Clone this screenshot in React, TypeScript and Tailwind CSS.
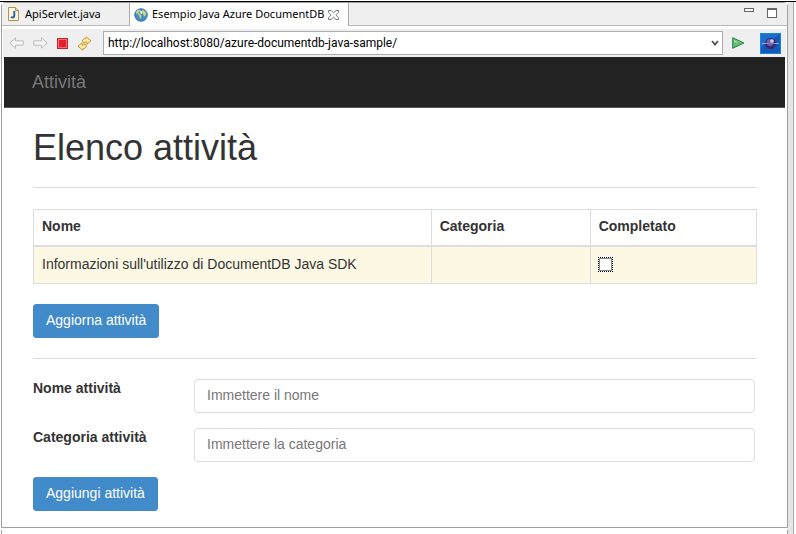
import type { ReactNode } from "react";

function JavaFileIcon() {
  return (
    <svg className="shrink-0" width="11" height="14" viewBox="0 0 11 14" aria-hidden="true">
      <path d="M.5.5h7l3 3v10H.5z" fill="#fdf7e3" stroke="#b5904f" />
      <path d="M7.500.5v3h3" fill="#e9cf8e" stroke="#b5904f" />
      <path d="M6.300 4v4.600q0 1.900-1.800 1.900-1 0-1.700-.6" fill="none" stroke="#2463a6" strokeWidth="1.900" />
    </svg>
  );
}

function GlobeIcon() {
  return (
    <svg className="shrink-0" width="14" height="14" viewBox="0 0 14 14" aria-hidden="true">
      <circle cx="7" cy="7" r="6.300" fill="#3c8fcb" stroke="#3b6f9f" strokeWidth=".9" />
      <path d="M2 3.500Q3.500 1.500 5.500 1.500L6 3 4.500 5 2 6z" fill="#a9d4a0" />
      <path d="M3.500 4.500L6 5.500 7.500 8 7 11 5.500 9.500 4.500 7z" fill="#e3c35c" />
      <path d="M8.500 1.800l3 2 .8 2.700-2 2-1.500-2.500-1-2z" fill="#cfd777" />
      <path d="M6.300 2.500l2 1-.5 2.500-1.500-.8z" fill="#e8f5fb" />
    </svg>
  );
}

function CloseIcon() {
  return (
    <svg className="shrink-0" width="11" height="10" viewBox="0 0 11 10" fill="#fff" stroke="#6f6f6f" strokeWidth=".9" aria-hidden="true">
      <path d="M.5.5h2.500l2.500 2.300L8 .5h2.500v1.800L7.800 5l2.700 2.700v1.800H8L5.500 7.200 3 9.500H.5V7.700L3.200 5 .5 2.300z" />
    </svg>
  );
}

function ArrowIcon({ flip = false }: { flip?: boolean }) {
  return (
    <svg width="15" height="12" viewBox="0 0 15 12" className={flip ? "shrink-0 -scale-x-100" : "shrink-0"} aria-hidden="true">
      <path d="M.8 6L6.500.8v3h7.700v4.400H6.500v3z" fill="#f6f6f6" stroke="#bcbcbc" strokeLinejoin="round" />
    </svg>
  );
}

function StopIcon() {
  return (
    <svg width="11" height="11" viewBox="0 0 11 11" aria-hidden="true">
      <rect x=".5" y=".5" width="10" height="10" fill="#e81e2e" stroke="#c4262e" />
      <rect x="1.500" y="1.500" width="8" height="8" fill="none" stroke="#f4717a" />
    </svg>
  );
}

function RefreshIcon() {
  return (
    <svg width="15" height="15" viewBox="0 0 15 15" fill="#fdeaa6" stroke="#c8902c" strokeWidth=".9" strokeLinejoin="round" aria-hidden="true">
      <path d="M6 6.700Q4.600 2.600 8.800 2.500L9 .7l5 4.100-4 3.400-.2-2.400Q7.900 5.200 7.800 6.900z" />
      <path d="M9 8.300Q10.400 12.400 6.200 12.500L6 14.300l-5-4.100 4-3.400.2 2.400Q7.100 9.800 7.200 8.100z" />
    </svg>
  );
}

function GoIcon() {
  return (
    <svg width="13" height="12" viewBox="0 0 13 12" aria-hidden="true">
      <path d="M.7.7L12 6 .7 11.300z" fill="#63bd73" stroke="#278347" strokeLinejoin="round" />
      <path d="M2 3l5 2.500H2z" fill="#a5dca6" />
    </svg>
  );
}

function EclipseIcon() {
  return (
    <svg width="21" height="21" viewBox="0 0 21 21" aria-hidden="true">
      <rect width="21" height="21" fill="#1b83dc" />
      <rect x="1" y="1" width="19" height="19" fill="#1259b8" />
      <path d="M1 1h19L1 14z" fill="#196fcb" />
      <circle cx="10.500" cy="10.500" r="5.500" fill="#38286f" />
      <circle cx="10" cy="9.500" r="3.500" fill="#6f61a5" />
      <circle cx="12" cy="8" r="1.800" fill="#d7cfed" />
      <path d="M2 10.500h4M15 10.500h4" stroke="#9fa9e2" />
      <path d="M6 10.500h9" stroke="#7f78c4" />
    </svg>
  );
}

function ToolButton({ label, children }: { label: string; children: ReactNode }) {
  return (
    <button type="button" aria-label={label} className="flex shrink-0 items-center justify-center">
      {children}
    </button>
  );
}

function EditorTabs() {
  return (
    <div className="flex h-[23px] items-stretch border-b border-[#bababa] bg-[#efefef] font-['Noto_Sans','Open_Sans',sans-serif] text-[11px] text-black">
      <button type="button" className="flex w-32 shrink-0 items-center gap-1.5 border-r border-[#aaa] pl-1.5">
        <JavaFileIcon />
        <span className="whitespace-nowrap">ApiServlet.java</span>
      </button>
      <button type="button" className="-mb-px flex w-[219px] shrink-0 items-center gap-1 border-r border-[#aaa] bg-white pl-1">
        <GlobeIcon />
        <span className="whitespace-nowrap">Esempio Java Azure DocumentDB</span>
        <CloseIcon />
      </button>
      <div className="ml-auto flex items-start gap-[13px] pt-[5px] pr-2.5">
        <button type="button" aria-label="Riduci a icona" className="h-1 w-2.5 border border-[#666] bg-white" />
        <button type="button" aria-label="Ingrandisci" className="h-2.5 w-2.5 border border-t-2 border-[#666] bg-white" />
      </div>
    </div>
  );
}

function BrowserBar() {
  return (
    <div className="mx-px mt-[3px] flex h-7 items-center bg-[#efefef] pr-[5px] pl-1.5">
      <div className="flex w-[94px] shrink-0 items-center gap-[9px]">
        <ToolButton label="Indietro"><ArrowIcon /></ToolButton>
        <ToolButton label="Avanti"><ArrowIcon flip /></ToolButton>
        <ToolButton label="Interrompi"><StopIcon /></ToolButton>
        <ToolButton label="Aggiorna"><RefreshIcon /></ToolButton>
      </div>
      <div className="relative min-w-0 flex-1">
        <select
          aria-label="Indirizzo"
          className="block h-6 w-full appearance-none border border-[#abadb3] bg-white pr-6 pl-1 text-xs text-black"
        >
          <option>http://localhost:8080/azure-documentdb-java-sample/</option>
        </select>
        <svg className="pointer-events-none absolute top-2 right-1" width="8" height="8" viewBox="0 0 8 8" aria-hidden="true">
          <path d="M1 2l3 3.500L7 2" fill="none" stroke="#505050" strokeWidth="1.800" />
        </svg>
      </div>
      <div className="flex shrink-0 items-center gap-[15px] pl-[9px]">
        <ToolButton label="Vai"><GoIcon /></ToolButton>
        <ToolButton label="Apri browser esterno"><EclipseIcon /></ToolButton>
      </div>
    </div>
  );
}

function PrimaryButton({ children }: { children: ReactNode }) {
  return (
    <button type="button" className="block h-[34px] rounded-[3px] border border-[#428bca] bg-[#428bca] px-3 pb-0.5 text-white">
      {children}
    </button>
  );
}

function Field({ id, label, placeholder }: { id: string; label: string; placeholder: string }) {
  return (
    <div className="mb-[15px] flex items-start">
      <label htmlFor={id} className="w-[161px] shrink-0 leading-[18px] font-bold">{label}</label>
      <input
        id={id}
        placeholder={placeholder}
        className="mr-0.5 h-[34px] min-w-0 flex-1 rounded border border-[#ddd] bg-white px-3 pb-0.5 placeholder:text-[#777]"
      />
    </div>
  );
}

function TaskPage() {
  return (
    <div className="mx-0.5 bg-white pb-4 font-['Liberation_Sans',Arial,sans-serif] text-sm leading-5 text-[#333]">
      <nav className="flex h-[51px] items-center border-b border-[#555] bg-[#222] px-7">
        <a href="#" className="text-lg text-[#777]">Attività</a>
      </nav>
      <main className="pr-7 pl-[29px]">
        <h1 className="pt-5 text-4xl">Elenco attività</h1>
        <hr className="mt-[19px] mb-[21px] border-[#ddd]" />
        <table className="mb-5 w-full table-fixed border-collapse border border-[#ddd] text-left">
          <colgroup>
            <col className="w-[55%]" />
            <col className="w-[22%]" />
            <col className="w-[23%]" />
          </colgroup>
          <thead>
            <tr className="border-b-2 border-[#ddd]">
              <th className="h-9 border-x border-[#ddd] px-2 pb-0.5">Nome</th>
              <th className="border-x border-[#ddd] px-2 pb-0.5">Categoria</th>
              <th className="border-x border-[#ddd] px-2 pb-0.5">Completato</th>
            </tr>
          </thead>
          <tbody>
            <tr className="bg-[#fcf8e3]">
              <td className="h-[38px] border-x border-[#ddd] px-2 pb-0.5">Informazioni sull'utilizzo di DocumentDB Java SDK</td>
              <td className="border-x border-[#ddd] px-2" />
              <td className="border-x border-[#ddd] px-[7px]">
                <input
                  type="checkbox"
                  aria-label="Completato"
                  className="block size-[15px] appearance-none border border-dotted border-black bg-white inset-ring inset-ring-[#888]"
                />
              </td>
            </tr>
          </tbody>
        </table>
        <PrimaryButton>Aggiorna attività</PrimaryButton>
        <hr className="my-5 border-[#ddd]" />
        <form>
          <Field id="nome" label="Nome attività" placeholder="Immettere il nome" />
          <Field id="categoria" label="Categoria attività" placeholder="Immettere la categoria" />
          <PrimaryButton>Aggiungi attività</PrimaryButton>
        </form>
      </main>
    </div>
  );
}

export default function App() {
  return (
    <div className="min-h-screen bg-white pt-px font-[Roboto,'Open_Sans',sans-serif]">
      <div className="h-px bg-black" />
      <div className="mr-[2px] flex min-h-[calc(100vh-2px)] border-r border-[#aaa] bg-[#e5e5e5] pr-[5px]">
        <div className="flex min-w-0 flex-1 flex-col bg-white pl-px">
          <section className="rounded-t border border-[#a0a0a0] bg-white">
            <EditorTabs />
            <BrowserBar />
            <TaskPage />
          </section>
          <div className="mt-0.5 flex-1 border-x border-[#a0a0a0]" />
        </div>
      </div>
    </div>
  );
}
